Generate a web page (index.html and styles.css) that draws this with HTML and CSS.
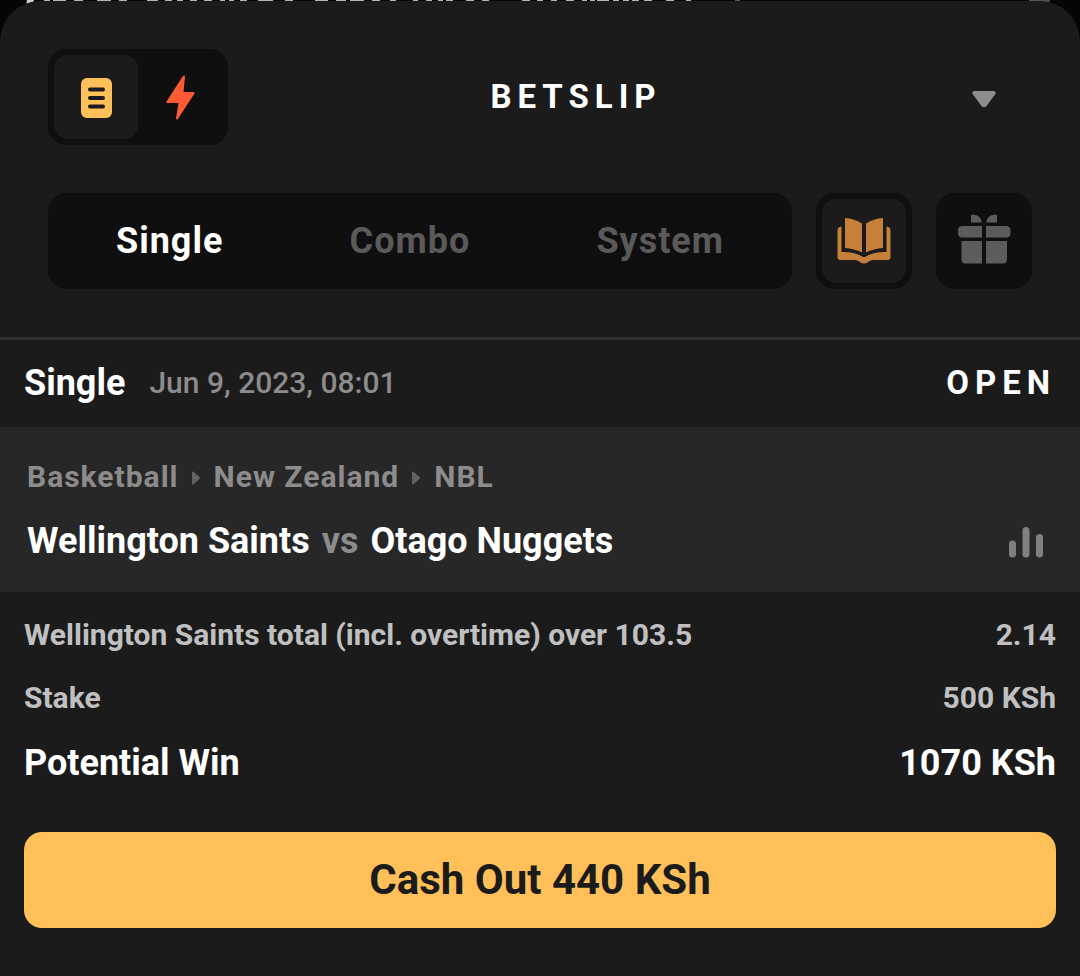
FILE: index.html
```html
<!DOCTYPE html>
<html lang="en">
<head>
<meta charset="utf-8">
<meta name="viewport" content="width=device-width, initial-scale=1">
<title>Betslip</title>
<link rel="stylesheet" href="styles.css">
</head>
<body>
<svg class="page-behind" viewBox="0 0 1080 12" preserveAspectRatio="none" aria-hidden="true">
  <path d="M27 0h7l-2 6h-6z" fill="#d0d0d0"/>
  <path d="M44 .5h6m3 0h13m8 0h9m14 0h14m8 0h8m20 0h11m7 0h7m5 0h6m7 0h7m7 0h8m8 0h5m4 0h5m6 0h7m11 0h15m12 0h8m22 0h13m8 0h10m4 0h14m8 0h8m10 0h6m17 0h5m8 0h6m6 0h5m3 0h7m13 0h8m8 0h7m33 0h8m7 0h6m8 0h6m9 0h8m8 0h5m3 0h5m2 0h12m4 0h6m4 0h6m3 0h7m5 0h8m14 0h8m12 0h5" stroke="#b4b4b4"/>
  <path d="M735 .5h5" stroke="#555"/>
  <path d="M1029 0h21l-1 3h-20z" fill="#555"/>
</svg>
<main class="sheet">
  <header class="sheet-head">
    <div class="top-bar">
      <div class="mode-switch">
        <button class="mode mode-active" type="button" aria-label="Betslip">
          <svg width="84" height="84" viewBox="0 0 84 84"><rect x="27" y="23" width="31" height="40" rx="6" fill="#ffc05a"/><path d="M36 34.500h13M36 43h13M36 51.500h13" stroke="#1b1b1b" stroke-width="4" stroke-linecap="round"/></svg>
        </button>
        <button class="mode" type="button" aria-label="Quick bets">
          <svg width="84" height="84" viewBox="0 0 84 84"><path d="M45 21L28.500 46.500q-.7 1.500.8 1.500H40.500L38 63.500q.5 2 2 .3L56.500 38.500q.8-1.600-.9-1.600H45.500L47 21.500q-.6-1.800-2-.5z" fill="#ff5a36"/></svg>
        </button>
      </div>
      <h1 class="title">BETSLIP</h1>
      <button class="collapse" type="button" aria-label="Collapse">
        <svg width="96" height="96" viewBox="0 0 96 96"><path d="M38.500 42h19q3.500.5 1.500 3.500l-8.500 11.500q-2.500 2.500-5 0L37 45.500q-2-3 1.500-3.500z" fill="#8e8e8e"/></svg>
      </button>
    </div>
    <div class="tab-bar">
      <nav class="tabs">
        <button class="tab tab-active" type="button">Single</button>
        <button class="tab" type="button">Combo</button>
        <button class="tab" type="button">System</button>
      </nav>
      <button class="tool tool-active" type="button" aria-label="Open bets">
        <svg width="84" height="84" viewBox="0 0 84 84"><g fill="#c7803b"><path d="M23 19q9 .5 17 5.500v29q-8-4-17-4.500z"/><path d="M61 19q-9 .5-17 5.500v29q8-4 17-4.500z"/><path d="M19.500 27.500v25.500q13-.5 21 4.800 1.500.8 3 0 8-5.300 21-4.800V27.500q4 .5 4 4V58q0 3-3 3H51q-2.500 0-4 1.500-5 4-10 0Q35.500 61 33 61H18.500q-3 0-3-3V31.500q0-3.500 4-4z"/></g></svg>
      </button>
      <button class="tool" type="button" aria-label="Gifts">
        <svg width="84" height="84" viewBox="0 0 84 84"><path d="M29 16q9-1.500 11 7.500H29zM55 16q-9-1.500-11 7.500h11zM20.500 27H40v11.500H20.500q-4.500 0-4.500-4.500v-2.500q0-4.500 4.500-4.500zM44 27h20q4.500 0 4.500 4.500V34q0 4.500-4.500 4.500H44zM19.500 42H40v22.500H23.500q-4 0-4-4zM44 42h21v18.500q0 4-4 4H44z" fill="#5c5c5c"/></svg>
      </button>
    </div>
  </header>
  <article class="bet">
    <div class="bet-head">
      <h2 class="bet-type">Single</h2>
      <time class="bet-date" datetime="2023-06-09T08:01">Jun 9, 2023, 08:01</time>
      <span class="bet-status">OPEN</span>
    </div>
    <section class="event">
      <div class="crumbs">
        <span>Basketball</span>
        <svg width="9" height="16" viewBox="0 0 9 16"><path d="M0 3.500q0-1.500 1.500-.8L7.500 8q1 1 0 2l-6 5.300Q0 16 0 14.500z" fill="#636363"/></svg>
        <span>New Zealand</span>
        <svg width="9" height="16" viewBox="0 0 9 16"><path d="M0 3.500q0-1.500 1.500-.8L7.500 8q1 1 0 2l-6 5.300Q0 16 0 14.500z" fill="#636363"/></svg>
        <span>NBL</span>
      </div>
      <div class="match">
        <h3 class="teams"><span>Wellington Saints</span><span class="versus">vs</span><span>Otago Nuggets</span></h3>
        <button class="stats" type="button" aria-label="Statistics">
          <svg width="36" height="32" viewBox="0 0 36 32"><path d="M4.500 18v10M18 4.500V28M31.500 11.500V28" stroke="#808080" stroke-width="7" stroke-linecap="round"/></svg>
        </button>
      </div>
    </section>
    <dl class="details">
      <div class="detail"><dt>Wellington Saints total (incl. overtime) over 103.5</dt><dd>2.14</dd></div>
      <div class="detail"><dt>Stake</dt><dd>500 KSh</dd></div>
      <div class="detail detail-win"><dt>Potential Win</dt><dd>1070 KSh</dd></div>
    </dl>
    <button class="cash-out" type="button">Cash Out 440 KSh</button>
  </article>
</main>
</body>
</html>
```
FILE: styles.css
```css
* {
  box-sizing: border-box;
}

body {
  margin: 0;
  padding-top: 1px;
  background: #050505;
  color: #fff;
  font-family: Roboto, "Liberation Sans", sans-serif;
  font-weight: 700;
}

button {
  margin: 0;
  padding: 0;
  border: 0;
  background: none;
  color: inherit;
  font: inherit;
  cursor: pointer;
}

svg {
  display: block;
}

h1, h2, h3, dl, dd {
  margin: 0;
  font-size: inherit;
  font-weight: inherit;
}

.page-behind {
  position: absolute;
  top: 0;
  left: 0;
  width: 100%;
  height: 12px;
}

.sheet {
  position: relative;
  min-height: calc(100vh - 1px);
  border-radius: 40px 40px 0 0;
  background: #1b1b1b;
}

.sheet-head {
  display: flex;
  flex-direction: column;
  gap: 48px;
  padding: 48px;
  border-bottom: 3px solid #303030;
}

.top-bar {
  display: flex;
  align-items: center;
  justify-content: space-between;
}

.mode-switch {
  display: flex;
  width: 180px;
  padding: 6px;
  border-radius: 18px;
  background: #0f0f0f;
}

.mode {
  width: 84px;
  height: 84px;
  border-radius: 14px;
}

.mode-active {
  background: #1b1b1b;
}

.title {
  padding-right: 12px;
  font-size: 33px;
  line-height: 44px;
  letter-spacing: 6px;
}

.collapse {
  width: 96px;
  height: 96px;
}

.tab-bar {
  display: flex;
  gap: 24px;
}

.tabs {
  display: flex;
  flex: 1;
  justify-content: space-between;
  padding: 0 68px;
  border-radius: 18px;
  background: #0f0f0f;
}

.tab {
  font-size: 36px;
  letter-spacing: 1px;
  color: #5a5a5a;
}

.tab-active {
  color: #fff;
}

.tool {
  width: 96px;
  height: 96px;
  padding: 6px;
  border-radius: 18px;
  background: #0f0f0f;
}

.tool-active svg {
  border-radius: 14px;
  background: #1b1b1b;
}

.bet-head {
  display: flex;
  align-items: center;
  gap: 24px;
  padding: 19px 24px;
  line-height: 47px;
}

.bet-type {
  font-size: 36px;
}

.bet-date {
  padding-bottom: 2px;
  font-size: 30px;
  font-weight: 500;
  color: #8c8c8c;
}

.bet-status {
  margin-left: auto;
  padding-bottom: 2px;
  font-size: 33px;
  letter-spacing: 6px;
}

.event {
  padding: 29px 36px 27px 27px;
  background: #272727;
}

.crumbs {
  display: flex;
  align-items: center;
  gap: 14px;
  font-size: 30px;
  line-height: 42px;
  letter-spacing: 1px;
  color: #8c8c8c;
}

.crumbs span + svg {
  margin-left: -1px;
}

.crumbs svg + span {
  margin-left: -1px;
}

.match {
  display: flex;
  align-items: center;
  justify-content: space-between;
  padding-top: 20px;
}

.teams {
  display: flex;
  gap: 12px;
  font-size: 36px;
  line-height: 47px;
}

.versus {
  color: #8c8c8c;
}

.details {
  display: flex;
  flex-direction: column;
  gap: 21px;
  padding: 22px 24px 0;
  font-size: 30px;
  line-height: 42px;
  color: #c0c0c0;
}

.detail {
  display: flex;
  justify-content: space-between;
}

.detail-win {
  font-size: 36px;
  line-height: 46px;
  color: #fff;
}

.cash-out {
  display: block;
  width: calc(100% - 48px);
  height: 96px;
  margin: 46px 24px 48px;
  padding-bottom: 2px;
  border-radius: 18px;
  background: #ffc05a;
  color: #1b1b1b;
  font-size: 42px;
}
```
